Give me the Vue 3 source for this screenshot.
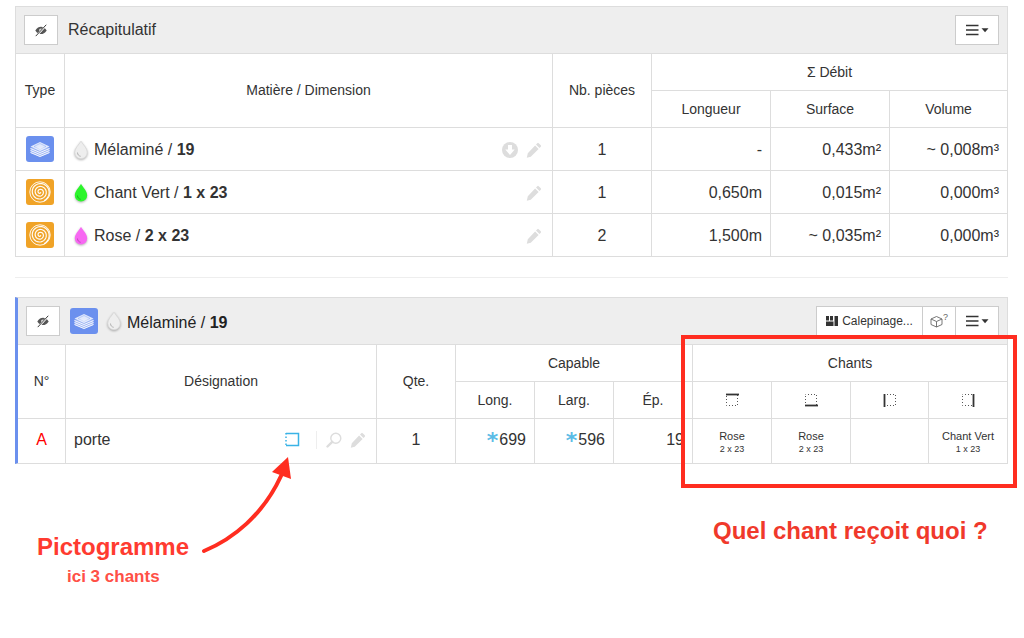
<script setup>
const spiral = (() => {
  let d = ''
  for (let a = 0; a <= 6.4 * Math.PI; a += 0.25) {
    const r = 0.5 + a * 0.46
    d += (d ? 'L' : 'M') + (14 + r * Math.cos(a)).toFixed(2) + ' ' + (13 + r * Math.sin(a)).toFixed(2)
  }
  return d
})()

const recapRows = [
  { icon: 'layers', drop: 'drop-grey', name: 'Mélaminé', dim: '19', down: true, qty: '1', len: '-', surf: '0,433m²', vol: '~ 0,008m³' },
  { icon: 'spiral', drop: 'drop-green', name: 'Chant Vert', dim: '1 x 23', down: false, qty: '1', len: '0,650m', surf: '0,015m²', vol: '0,000m³' },
  { icon: 'spiral', drop: 'drop-pink', name: 'Rose', dim: '2 x 23', down: false, qty: '2', len: '1,500m', surf: '~ 0,035m²', vol: '0,000m³' },
]
const edges = [
  { x1: 1, y1: 1.5, x2: 14, y2: 1.5 },
  { x1: 1, y1: 12.5, x2: 14, y2: 12.5 },
  { x1: 1.5, y1: 1, x2: 1.5, y2: 14 },
  { x1: 12.5, y1: 1, x2: 12.5, y2: 14 },
]
const chants = [
  { name: 'Rose', dim: '2 x 23' },
  { name: 'Rose', dim: '2 x 23' },
  { name: '', dim: '' },
  { name: 'Chant Vert', dim: '1 x 23' },
]
</script>

<template>
  <div class="page">
    <svg class="defs" aria-hidden="true">
      <symbol id="eye" viewBox="0 0 16 16">
        <path d="M1.500 8.500C3.500 5.500 5.700 4.300 8 4.300s4.500 1.200 6.500 4.200c-2 3-4.200 4.200-6.500 4.200s-4.500-1.200-6.500-4.200z" fill="#555" />
        <circle cx="7.500" cy="8" r="1.800" fill="#ccc" />
        <path d="M3 14.500 14 2.500" stroke="#fff" stroke-width="2.200" />
        <path d="M2 15 14 2" stroke="#333" stroke-width="1.100" />
      </symbol>
      <symbol id="pencil" viewBox="0 0 16 16">
        <path d="M11.300 1.200a1 1 0 0 1 1.400 0l2.100 2.100a1 1 0 0 1 0 1.400l-1.300 1.300L10 2.500zM9.100 3.400l3.500 3.500-7.800 7.800L.8 15.800l1-4.500z" fill="#ddd" />
      </symbol>
      <symbol id="menu" viewBox="0 0 24 12">
        <path d="M0 1.500h12.500M0 6h12.500M0 10.500h12.500" stroke="#333" stroke-width="1.500" />
        <path d="M15.500 4.200h7l-3.500 4z" fill="#333" />
      </symbol>
      <symbol id="layers" viewBox="0 0 28 26">
        <rect width="28" height="26" rx="3" fill="#6b90ee" />
        <path d="M14 6 23.500 10.500 14 15 4.500 10.500z" fill="#fff" opacity=".8" />
        <path d="M14 7.500 20 10.500 14 13.500 8 10.500z" fill="none" stroke="#6b90ee" stroke-width=".6" opacity=".6" />
        <path d="M4.500 11.500v5.500L14 21 23.500 17v-5.500" fill="#fff" opacity=".35" />
        <path d="M4.500 12.500 14 16.500 23.500 12.500M4.500 14.500 14 18.500 23.500 14.500M4.500 16.500 14 20.500 23.500 16.500" fill="none" stroke="#fff" stroke-width="1" opacity=".9" />
      </symbol>
      <symbol id="spiral" viewBox="0 0 28 26">
        <rect width="28" height="26" rx="3" fill="#f0a327" />
        <path :d="spiral" fill="none" stroke="#fff" stroke-width="1.200" opacity=".95" />
        <circle cx="14" cy="13" r="10.200" fill="none" stroke="#fff" stroke-width="1" opacity=".9" />
      </symbol>
      <symbol id="drop-grey" viewBox="0 0 14 20">
        <path d="M7 1.200C9 4.800 13.200 8 13.200 12.500A6.200 6.200 0 0 1 .8 12.500C.8 8 5 4.800 7 1.200z" fill="#eee" stroke="#d8d8d8" stroke-width=".8" />
        <path d="M3.500 12.500c0 2.200 1.400 3.500 3.200 3.800" fill="none" stroke="#aaa" stroke-width=".9" />
      </symbol>
      <symbol id="drop-green" viewBox="0 0 14 20">
        <path d="M7 .8C9 4.500 13.200 8 13.200 12.300A6.200 6.200 0 0 1 .8 12.300C.8 8 5 4.500 7 .8z" fill="#2cf52c" />
        <path d="M3.500 12.500c0 2.200 1.400 3.500 3.200 3.800" fill="none" stroke="#19b019" stroke-width=".9" />
      </symbol>
      <symbol id="drop-pink" viewBox="0 0 14 20">
        <path d="M7 .8C9 4.500 13.200 8 13.200 12.300A6.200 6.200 0 0 1 .8 12.300C.8 8 5 4.500 7 .8z" fill="#f768f2" />
        <path d="M3.500 12.500c0 2.200 1.400 3.500 3.200 3.800" fill="none" stroke="#bb45b6" stroke-width=".9" />
      </symbol>
    </svg>

    <section class="panel">
      <header class="heading">
        <button class="btn btn-eye"><svg class="i14"><use href="#eye" /></svg></button>
        <span class="title">Récapitulatif</span>
        <button class="btn btn-menu push"><svg class="i-menu"><use href="#menu" /></svg></button>
      </header>
      <table class="tbl tbl-recap">
        <colgroup>
          <col style="width:49px" /><col style="width:488px" /><col style="width:99px" />
          <col style="width:119px" /><col style="width:119px" /><col style="width:117px" />
        </colgroup>
        <thead>
          <tr>
            <th rowspan="2">Type</th>
            <th rowspan="2">Matière / Dimension</th>
            <th rowspan="2">Nb. pièces</th>
            <th colspan="3" class="last">Σ Débit</th>
          </tr>
          <tr>
            <th>Longueur</th><th>Surface</th><th class="last">Volume</th>
          </tr>
        </thead>
        <tbody>
          <tr v-for="r in recapRows" :key="r.name">
            <td class="c ico"><svg class="i26"><use :href="'#' + r.icon" /></svg></td>
            <td class="name">
              <div class="name-in">
                <svg class="drop d1"><use :href="'#' + r.drop" /></svg>
                <span>{{ r.name }} / <b>{{ r.dim }}</b></span>
                <span class="tools">
                  <svg v-if="r.down" class="i16" viewBox="0 0 16 16">
                    <circle cx="8" cy="8" r="8" fill="#ddd" />
                    <path d="M6 3h4v4.500h2.700L8 13 3.300 7.500H6z" fill="#fff" />
                  </svg>
                  <svg class="i16"><use href="#pencil" /></svg>
                </span>
              </div>
            </td>
            <td class="c">{{ r.qty }}</td>
            <td class="n">{{ r.len }}</td>
            <td class="n">{{ r.surf }}</td>
            <td class="n last">{{ r.vol }}</td>
          </tr>
        </tbody>
      </table>
    </section>

    <hr class="sep" />

    <section class="panel panel-blue">
      <header class="heading">
        <button class="btn btn-eye"><svg class="i14"><use href="#eye" /></svg></button>
        <svg class="i-big"><use href="#layers" /></svg>
        <svg class="drop"><use href="#drop-grey" /></svg>
        <span class="title dark">Mélaminé / <b>19</b></span>
        <div class="group push">
          <button class="btn btn-cal">
            <svg class="i-cal" viewBox="0 0 12 10">
              <path d="M0 0h3v4.500H0zM4 0h3v4.500H4zM8.500 0H12v10H8.500zM0 5.500h7.500V10H0z" fill="#333" />
            </svg>
            Calepinage...
          </button>
          <button class="btn btn-cube">
            <svg class="i-cube" viewBox="0 0 13 13">
              <path d="M6.500 1.500 12 4v5.500L6.500 12 1 9.500V4zM1 4l5.500 2.500L12 4M6.500 6.500V12" fill="none" stroke="#666" stroke-width=".9" />
            </svg><sup class="q">?</sup>
          </button>
          <button class="btn btn-menu2"><svg class="i-menu"><use href="#menu" /></svg></button>
        </div>
      </header>
      <table class="tbl tbl-part">
        <colgroup>
          <col style="width:48px" /><col style="width:311px" />
          <col style="width:79px" /><col style="width:79px" /><col style="width:79px" /><col style="width:79px" />
          <col style="width:79px" /><col style="width:79px" /><col style="width:78px" /><col style="width:78px" />
        </colgroup>
        <thead>
          <tr>
            <th rowspan="2">N°</th>
            <th rowspan="2">Désignation</th>
            <th rowspan="2">Qte.</th>
            <th colspan="3">Capable</th>
            <th colspan="4" class="last">Chants</th>
          </tr>
          <tr>
            <th>Long.</th><th>Larg.</th><th>Ép.</th>
            <th v-for="(e, i) in edges" :key="i" :class="{ last: i === 3 }">
              <svg class="edge" viewBox="0 0 14 14">
                <rect x="1.500" y="1.500" width="11" height="11" fill="none" stroke="#555" stroke-dasharray="1 2" stroke-dashoffset=".5" />
                <line :x1="e.x1" :y1="e.y1" :x2="e.x2" :y2="e.y2" stroke="#333" stroke-width="1.800" />
              </svg>
            </th>
          </tr>
        </thead>
        <tbody>
          <tr>
            <td class="c letter">A</td>
            <td class="name">
              <div class="name-in">
                <span>porte</span>
                <span class="tools tools-part">
                  <svg class="picto" viewBox="0 0 15 15">
                    <path d="M1 1.500h12.500v12H1" fill="none" stroke="#3ab3e6" stroke-width="1.500" />
                    <path d="M1 1v13.500" fill="none" stroke="#3ab3e6" stroke-width="1.500" stroke-dasharray="1.500 2" />
                  </svg>
                  <i class="vbar"></i>
                  <svg class="i16 mag" viewBox="0 0 16 16">
                    <circle cx="9.800" cy="6.200" r="5" fill="none" stroke="#ddd" stroke-width="1.400" />
                    <path d="M6.200 9.800 1.500 14.500" stroke="#ddd" stroke-width="2.400" stroke-linecap="round" />
                  </svg>
                  <svg class="i16"><use href="#pencil" /></svg>
                </span>
              </div>
            </td>
            <td class="c">1</td>
            <td class="n"><span class="star">*</span>699</td>
            <td class="n"><span class="star">*</span>596</td>
            <td class="n">19</td>
            <td v-for="(c, i) in chants" :key="i" class="c chant" :class="{ last: i === 3 }">
              <div class="chant-name">{{ c.name }}</div>
              <div class="chant-dim">{{ c.dim }}</div>
            </td>
          </tr>
        </tbody>
      </table>
    </section>

    <div class="redbox"></div>
    <svg class="arrow" viewBox="0 0 110 110">
      <path d="M4 101C33 89 63 65 81 26" fill="none" stroke="#ff2d20" stroke-width="4" stroke-linecap="round" />
      <path d="M88 7 72 22 91 29z" fill="#ff2d20" />
    </svg>
    <div class="note note-a">Pictogramme</div>
    <div class="note note-b">ici 3 chants</div>
    <div class="note note-c">Quel chant reçoit quoi ?</div>
  </div>
</template>

<style scoped>
.page {
  position: relative;
  width: 1024px;
  height: 638px;
  padding: 6px 16px 0 15px;
  box-sizing: border-box;
  background: #fff;
  overflow: hidden;
  font-family: "Liberation Sans", Arial, sans-serif;
  color: #333;
}
.defs { display: none; }
.panel { border: 1px solid #ddd; }
.panel-blue { border-left: 3px solid #6b90ee; }
.heading {
  display: flex;
  align-items: center;
  height: 46px;
  padding: 0 8px;
  background: #eee;
  border-bottom: 1px solid #ddd;
}
.push { margin-left: auto; }
.btn {
  display: flex;
  align-items: center;
  justify-content: center;
  height: 30px;
  padding: 0;
  box-sizing: border-box;
  background: #fff;
  border: 1px solid #ccc;
  font: 12px "Liberation Sans", Arial, sans-serif;
  color: #333;
}
.btn-eye { width: 34px; margin-right: 10px; }
.btn-menu { width: 44px; }
.title { font-size: 16px; color: #333; }
.title.dark { color: #222; padding-top: 3px; }
.i14 { width: 14px; height: 14px; }
.i16 { width: 16px; height: 16px; display: block; }
.i26 { width: 28px; height: 26px; display: block; margin: 0 auto; }
.i-big { width: 28px; height: 26px; margin-right: 9px; }
.i-menu { width: 24px; height: 12px; margin-left: 2px; }
.drop {
  width: 14px;
  height: 20px;
  margin-right: 6px;
  flex: none;
  filter: drop-shadow(0 1px 1px rgba(0, 0, 0, .3));
}
.d1 { margin-left: 1px; }
.group { display: flex; }
.group .btn { margin-left: -1px; }
.btn-cal { width: 107px; gap: 4px; }
.i-cal { width: 12px; height: 10px; }
.btn-cube { width: 34px; }
.i-cube { width: 13px; height: 13px; }
.q { font-size: 9px; color: #666; line-height: 1; align-self: flex-start; margin-top: 6px; }
.btn-menu2 { width: 44px; }

.tbl {
  table-layout: fixed;
  width: 100%;
  border-collapse: separate;
  border-spacing: 0;
}
.tbl th, .tbl td {
  padding: 0 8px;
  border-right: 1px solid #ddd;
  border-bottom: 1px solid #ddd;
  box-sizing: border-box;
}
.tbl th {
  height: 37px;
  font-size: 14px;
  font-weight: 400;
  text-align: center;
}
.tbl th[rowspan] { padding-bottom: 2px; }
.tbl td { height: 43px; font-size: 16px; }
.tbl-recap td { padding-top: 2px; }
.tbl-recap td.ico { padding-top: 0; }
.tbl-recap tbody tr:last-child td { border-bottom: 0; height: 42px; }
.tbl-part tbody td { height: 44px; border-bottom: 0; padding-bottom: 2px; }
.tbl .last { border-right: 0; }
.tbl td.c { text-align: center; }
.tbl td.n { text-align: right; }
.name-in { display: flex; align-items: center; }
.tools { margin-left: auto; display: flex; align-items: center; gap: 8px; margin-right: 2px; }
.tools-part { gap: 0; }
.picto { width: 15px; height: 15px; margin-right: 16px; margin-bottom: 2px; }
.vbar { width: 1px; height: 18px; background: #eee; margin-right: 9px; }
.mag { margin-right: 8px; }
.edge { width: 14px; height: 14px; display: block; margin: 0 auto; }
.tbl td.letter { color: #f00; }
.star {
  font-family: "DejaVu Sans", sans-serif;
  font-weight: 700;
  color: #5bbce6;
  font-size: 22px;
  line-height: 10px;
  vertical-align: -3px;
  margin-right: 1px;
}
.tbl td.chant { padding: 2px 2px 0; }
.chant-name { font-size: 11px; line-height: 13px; }
.chant-dim { font-size: 9px; line-height: 12px; }
.sep { height: 1px; margin: 20px 0 19px; border: 0; background: #eee; }

.redbox {
  position: absolute;
  left: 681px;
  top: 335px;
  width: 336px;
  height: 153px;
  box-sizing: border-box;
  border: 4px solid #ff2d20;
}
.arrow { position: absolute; left: 200px; top: 450px; width: 110px; height: 110px; }
.note { position: absolute; font-weight: 700; white-space: nowrap; }
.note-a { left: 37px; top: 533px; font-size: 24px; color: #ff3b30; }
.note-b { left: 67px; top: 567px; font-size: 17px; color: #ff5046; }
.note-c { left: 713px; top: 517px; font-size: 24px; color: #f0392b; }
</style>
